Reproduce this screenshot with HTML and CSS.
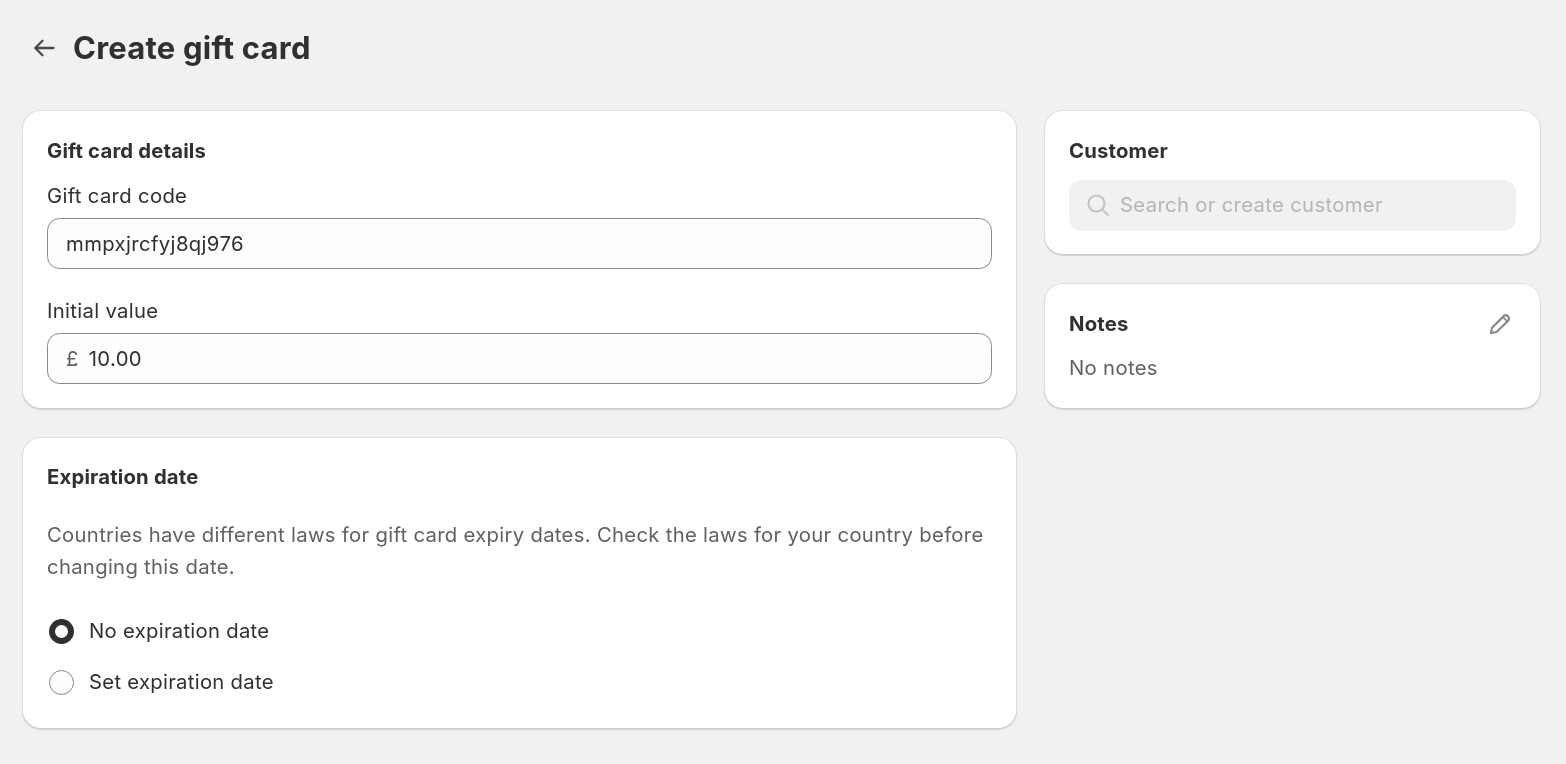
FILE: index.html
```html
<!DOCTYPE html>
<html lang="en">
<head>
    <meta charset="UTF-8">
    <meta name="viewport" content="width=device-width, initial-scale=1.0">
    <title>Create gift card</title>
    <link rel="stylesheet" href="styles.css">
</head>
<body>
    <div class="page">
        <div class="page-header">
            <svg class="back-icon" width="22" height="22" viewBox="0 0 22 22" fill="none">
                <path d="M20.5 11H2.5M9.5 3.8L2.3 11l7.2 7.2" stroke="#4a4a4a" stroke-width="2.3" stroke-linecap="round" stroke-linejoin="round"/>
            </svg>
            <h1>Create gift card</h1>
        </div>
        <div class="layout">
            <div class="main-column">
                <div class="card details-card">
                    <h2>Gift card details</h2>
                    <div class="field first-field">
                        <label for="code">Gift card code</label>
                        <div class="input-box"><input type="text" id="code" value="mmpxjrcfyj8qj976"></div>
                    </div>
                    <div class="field">
                        <label for="value">Initial value</label>
                        <div class="input-box"><span class="prefix">£</span><input type="text" id="value" value="10.00"></div>
                    </div>
                </div>
                <div class="card expiry-card">
                    <h2>Expiration date</h2>
                    <p class="muted expiry-text">Countries have different laws for gift card expiry dates. Check the laws for your country before changing this date.</p>
                    <div class="radio-list">
                        <div class="radio-row"><span class="radio checked"></span>No expiration date</div>
                        <div class="radio-row"><span class="radio"></span>Set expiration date</div>
                    </div>
                </div>
            </div>
            <div class="side-column">
                <div class="card customer-card">
                    <h2>Customer</h2>
                    <div class="search-box">
                        <svg width="24" height="24" viewBox="0 0 24 24" fill="none">
                            <circle cx="10.5" cy="10.5" r="8" stroke="#c4c4c4" stroke-width="2.2"/>
                            <path d="M16.5 16.5L22 22" stroke="#c4c4c4" stroke-width="2.2" stroke-linecap="round"/>
                        </svg>
                        <span>Search or create customer</span>
                    </div>
                </div>
                <div class="card">
                    <div class="card-title-row">
                        <h2>Notes</h2>
                        <svg width="24" height="24" viewBox="0 0 24 24" fill="none">
                            <path d="M2.9 21.1L4 15.8 15.7 4.1a3.2 3.2 0 0 1 4.5 4.5L8.5 20z" stroke="#8a8a8a" stroke-width="2.2" stroke-linejoin="round"/>
                            <path d="M15.2 5.4l3.8 3.8" stroke="#8a8a8a" stroke-width="1.8"/>
                        </svg>
                    </div>
                    <p class="muted notes-text">No notes</p>
                </div>
            </div>
        </div>
    </div>
</body>
</html>
```

FILE: styles.css
```css
* {
    box-sizing: border-box;
}

body {
    font-family: Inter, "Liberation Sans", sans-serif;
    font-size: 20.3px;
    line-height: 32px;
    letter-spacing: 0.32px;
    color: #303030;
    background-color: #f1f1f1;
    margin: 0;
    padding: 0;
}

.page {
    padding: 23px 25px 35px 22px;
    will-change: transform;
}

.page-header {
    display: flex;
    align-items: center;
    gap: 18px;
    height: 50px;
    padding-left: 11px;
    margin-bottom: 37px;
}

h1 {
    margin: 0;
    font-size: 31px;
    line-height: 50px;
    font-weight: 700;
    letter-spacing: 0.22px;
}

h2 {
    margin: 0;
    font-size: 20.3px;
    line-height: 32px;
    font-weight: 650;
    letter-spacing: 0.18px;
}

.layout {
    display: flex;
    align-items: flex-start;
    gap: 27px;
}

.main-column {
    width: 995px;
    display: flex;
    flex-direction: column;
    gap: 28px;
}

.side-column {
    width: 497px;
    display: flex;
    flex-direction: column;
    gap: 28px;
}

.card {
    padding: 25px;
    background-color: #fff;
    border-radius: 19px;
    box-shadow: inset 0 0 0 1px rgba(0, 0, 0, 0.13), inset 0 -1px 0 rgba(0, 0, 0, 0.08), 0 1px 1px rgba(0, 0, 0, 0.13);
}

.first-field {
    margin-top: 13px;
}

.field + .field {
    margin-top: 26px;
}

.field label {
    display: block;
    margin-bottom: 6px;
}

.input-box {
    display: flex;
    align-items: center;
    height: 51px;
    padding: 0 18px;
    background-color: #fdfdfd;
    border: 1px solid #8a8a8a;
    border-radius: 12.5px;
}

.input-box input {
    flex: 1;
    min-width: 0;
    padding: 0;
    border: none;
    outline: none;
    background: transparent;
    font: inherit;
    letter-spacing: 0.37px;
    color: #303030;
}

.prefix {
    margin-right: 10px;
    color: #616161;
}

.muted {
    margin: 0;
    color: #616161;
}

.expiry-card {
    padding-top: 24px;
    padding-bottom: 31px;
}

.expiry-text {
    margin-top: 26px;
    letter-spacing: 0.3px;
}

.radio-list {
    margin-top: 32px;
    display: flex;
    flex-direction: column;
    gap: 19px;
    letter-spacing: 0.28px;
}

.radio-row {
    display: flex;
    align-items: center;
    gap: 15px;
    padding-left: 2px;
}

.radio {
    width: 25px;
    height: 25px;
    border-radius: 50%;
    background-color: #fdfdfd;
    border: 1px solid #8a8a8a;
}

.radio.checked {
    background-color: #fff;
    border: 6.5px solid #303030;
}

.customer-card {
    padding-bottom: 24px;
}

.search-box {
    display: flex;
    align-items: center;
    gap: 10px;
    height: 51px;
    margin-top: 13px;
    padding: 0 17px 1px;
    background-color: #f1f1f1;
    border-radius: 12.5px;
    color: #b5b5b5;
}

.card-title-row {
    display: flex;
    align-items: center;
    justify-content: space-between;
    padding-right: 4px;
}

.notes-text {
    margin-top: 12px;
}
```
